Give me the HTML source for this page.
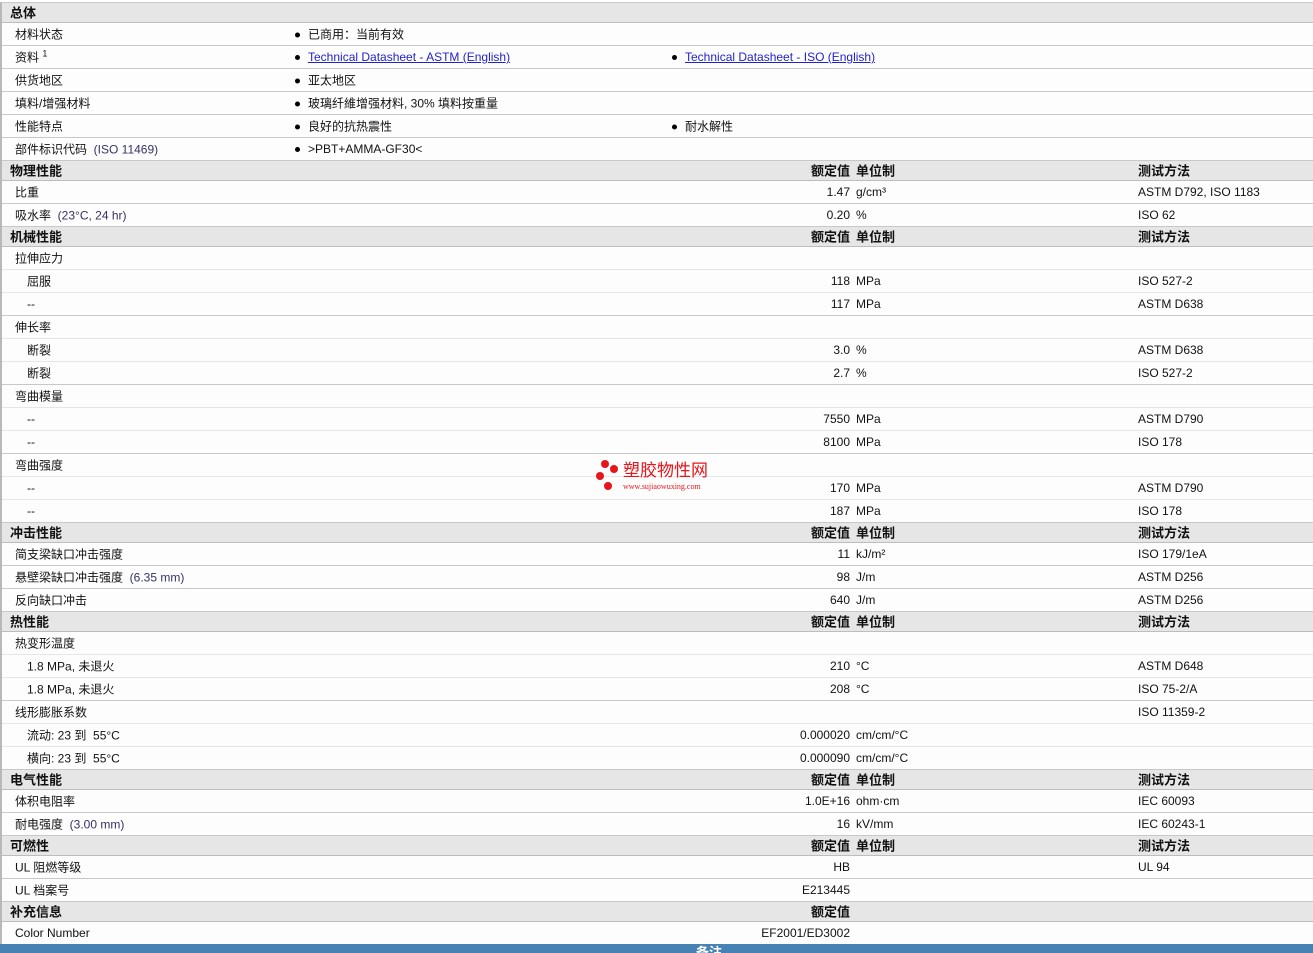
<!DOCTYPE html>
<html><head><meta charset="utf-8"><style>
*{margin:0;padding:0;box-sizing:border-box}
body{width:1313px;height:953px;overflow:hidden;background:#fff;font-family:"Liberation Sans","Noto Sans CJK SC",sans-serif;font-size:12px;color:#111;position:relative}
#t{position:absolute;left:0;top:2px;width:1313px;border-top:1px solid #c8c8c8;border-left:2px solid #b8b8b8}
.h,.r,.l{position:relative;width:100%}
.h{height:20px;background:#e6e6e6;border-bottom:1px solid #bdbdbd;font-weight:bold;font-size:13px}
.r{height:23px;border-bottom:1px solid #c8c8c8;background:#fdfdfd}
.l{height:23px;border-bottom:1px solid #e6e6e6;background:#fdfdfd}
.h span,.r span,.l span{position:absolute;top:50%;transform:translateY(-50%);white-space:nowrap}
.h span{margin-top:-1px}
.h .n{left:8px}
.k{left:13px}.k2{left:25px}
.v{right:463px;text-align:right}
.u{left:854px}
.m{left:1136px}
.b1{left:293px}.b2{left:670px}
.d{display:inline-block;width:5px;height:5px;border-radius:50%;background:#000;margin-right:8px;vertical-align:middle}
a{color:#2222cc;text-decoration:underline}
.g{color:#333366}
#bar{position:absolute;left:0;top:944px;width:1313px;height:9px;background:#4682b4;overflow:hidden}
#bar b{position:absolute;left:696px;top:-2px;color:#fff;font-size:13px}
#wm{position:absolute;left:594px;top:459px;width:130px;height:34px}
</style></head><body>
<div id="t">
<div class="h"><span class="n">总体</span></div>
<div class="r"><span class="k">材料状态</span><span class="b1"><i class="d"></i>已商用：当前有效</span></div>
<div class="r"><span class="k">资料 <sup style="font-size:9px">1</sup></span><span class="b1"><i class="d"></i><a>Technical Datasheet - ASTM (English)</a></span><span class="b2"><i class="d"></i><a>Technical Datasheet - ISO (English)</a></span></div>
<div class="r"><span class="k">供货地区</span><span class="b1"><i class="d"></i>亚太地区</span></div>
<div class="r"><span class="k">填料/增强材料</span><span class="b1"><i class="d"></i>玻璃纤維增强材料, 30% 填料按重量</span></div>
<div class="r"><span class="k">性能特点</span><span class="b1"><i class="d"></i>良好的抗热震性</span><span class="b2"><i class="d"></i>耐水解性</span></div>
<div class="r"><span class="k">部件标识代码 <span class="g" style="position:static;transform:none">&nbsp;(ISO 11469)</span></span><span class="b1"><i class="d"></i>&gt;PBT+AMMA-GF30&lt;</span></div>

<div class="h"><span class="n">物理性能</span><span class="v">额定值</span><span class="u">单位制</span><span class="m">测试方法</span></div>
<div class="r"><span class="k">比重</span><span class="v">1.47</span><span class="u">g/cm³</span><span class="m">ASTM D792, ISO 1183</span></div>
<div class="r"><span class="k">吸水率 <span class="g" style="position:static;transform:none">&nbsp;(23°C, 24 hr)</span></span><span class="v">0.20</span><span class="u">%</span><span class="m">ISO 62</span></div>

<div class="h"><span class="n">机械性能</span><span class="v">额定值</span><span class="u">单位制</span><span class="m">测试方法</span></div>
<div class="l"><span class="k">拉伸应力</span></div>
<div class="l"><span class="k2">屈服</span><span class="v">118</span><span class="u">MPa</span><span class="m">ISO 527-2</span></div>
<div class="r"><span class="k2">--</span><span class="v">117</span><span class="u">MPa</span><span class="m">ASTM D638</span></div>
<div class="l"><span class="k">伸长率</span></div>
<div class="l"><span class="k2">断裂</span><span class="v">3.0</span><span class="u">%</span><span class="m">ASTM D638</span></div>
<div class="r"><span class="k2">断裂</span><span class="v">2.7</span><span class="u">%</span><span class="m">ISO 527-2</span></div>
<div class="l"><span class="k">弯曲模量</span></div>
<div class="l"><span class="k2">--</span><span class="v">7550</span><span class="u">MPa</span><span class="m">ASTM D790</span></div>
<div class="r"><span class="k2">--</span><span class="v">8100</span><span class="u">MPa</span><span class="m">ISO 178</span></div>
<div class="l"><span class="k">弯曲强度</span></div>
<div class="l"><span class="k2">--</span><span class="v">170</span><span class="u">MPa</span><span class="m">ASTM D790</span></div>
<div class="r"><span class="k2">--</span><span class="v">187</span><span class="u">MPa</span><span class="m">ISO 178</span></div>

<div class="h"><span class="n">冲击性能</span><span class="v">额定值</span><span class="u">单位制</span><span class="m">测试方法</span></div>
<div class="r"><span class="k">简支梁缺口冲击强度</span><span class="v">11</span><span class="u">kJ/m²</span><span class="m">ISO 179/1eA</span></div>
<div class="r"><span class="k">悬壁梁缺口冲击强度 <span class="g" style="position:static;transform:none">&nbsp;(6.35 mm)</span></span><span class="v">98</span><span class="u">J/m</span><span class="m">ASTM D256</span></div>
<div class="r"><span class="k">反向缺口冲击</span><span class="v">640</span><span class="u">J/m</span><span class="m">ASTM D256</span></div>

<div class="h"><span class="n">热性能</span><span class="v">额定值</span><span class="u">单位制</span><span class="m">测试方法</span></div>
<div class="l"><span class="k">热变形温度</span></div>
<div class="l"><span class="k2">1.8 MPa, 未退火</span><span class="v">210</span><span class="u">°C</span><span class="m">ASTM D648</span></div>
<div class="r"><span class="k2">1.8 MPa, 未退火</span><span class="v">208</span><span class="u">°C</span><span class="m">ISO 75-2/A</span></div>
<div class="l"><span class="k">线形膨胀系数</span><span class="m">ISO 11359-2</span></div>
<div class="l"><span class="k2">流动: 23 到 &nbsp;55°C</span><span class="v">0.000020</span><span class="u">cm/cm/°C</span></div>
<div class="r"><span class="k2">横向: 23 到 &nbsp;55°C</span><span class="v">0.000090</span><span class="u">cm/cm/°C</span></div>

<div class="h"><span class="n">电气性能</span><span class="v">额定值</span><span class="u">单位制</span><span class="m">测试方法</span></div>
<div class="r"><span class="k">体积电阻率</span><span class="v">1.0E+16</span><span class="u">ohm·cm</span><span class="m">IEC 60093</span></div>
<div class="r"><span class="k">耐电强度 <span class="g" style="position:static;transform:none">&nbsp;(3.00 mm)</span></span><span class="v">16</span><span class="u">kV/mm</span><span class="m">IEC 60243-1</span></div>

<div class="h"><span class="n">可燃性</span><span class="v">额定值</span><span class="u">单位制</span><span class="m">测试方法</span></div>
<div class="r"><span class="k">UL 阻燃等级</span><span class="v">HB</span><span class="m">UL 94</span></div>
<div class="r"><span class="k">UL 档案号</span><span class="v">E213445</span></div>

<div class="h"><span class="n">补充信息</span><span class="v">额定值</span></div>
<div class="r"><span class="k">Color Number</span><span class="v">EF2001/ED3002</span></div>
</div>
<div id="wm">
<svg width="30" height="34" style="position:absolute;left:0;top:0"><circle cx="11" cy="5" r="4" fill="#e8141b"/><circle cx="20" cy="10" r="4" fill="#e8141b"/><circle cx="6" cy="17" r="4" fill="#e8141b"/><circle cx="14" cy="27" r="4" fill="#e8141b"/></svg>
<div style="position:absolute;left:29px;top:2px;color:#e8141b;font-size:17px;white-space:nowrap;line-height:20px">塑胶物性网</div>
<div style="position:absolute;left:29px;top:23px;color:#e8141b;font-size:8px;font-family:'Liberation Serif',serif;white-space:nowrap">www.sujiaowuxing.com</div>
</div>
<div id="bar"><b>备注</b></div>
</body></html>
